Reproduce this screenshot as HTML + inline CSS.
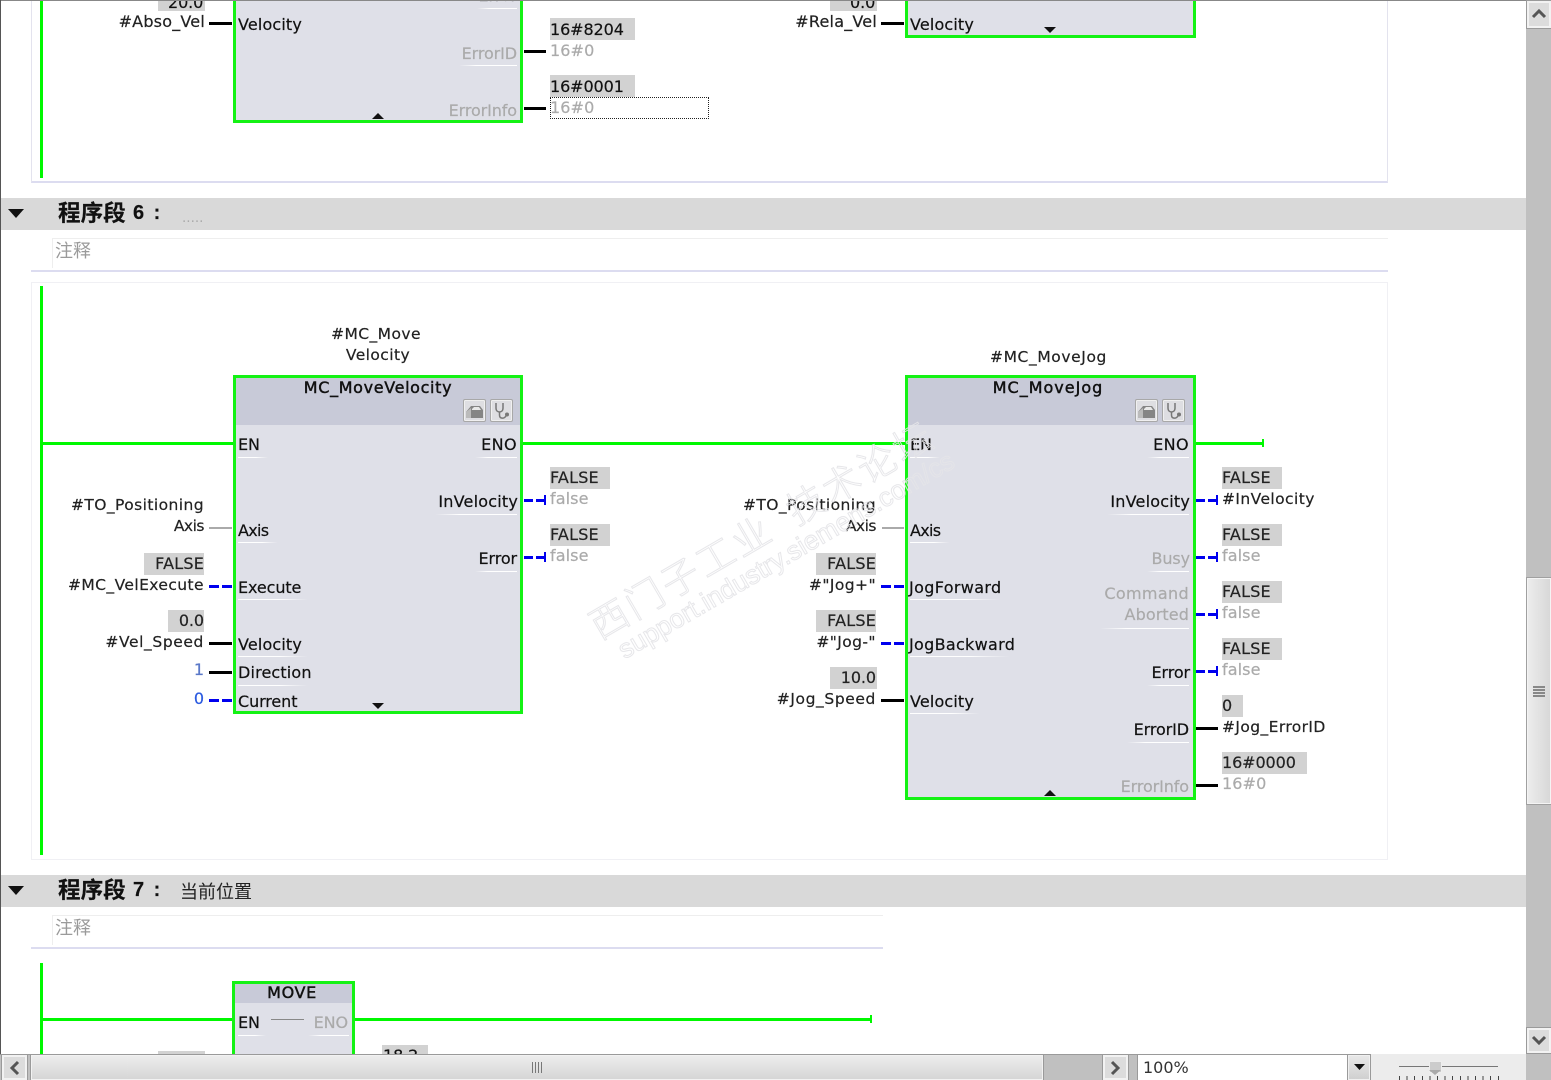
<!DOCTYPE html>
<html><head><meta charset="utf-8"><style>
html,body{margin:0;padding:0;background:#fff}
#p{position:relative;width:1551px;height:1080px;overflow:hidden;background:#fff;font-family:"DejaVu Sans","Liberation Sans",sans-serif;font-size:16px;color:#111}
#c{position:absolute;left:0;top:0;width:1551px;height:1080px;filter:blur(.35px)}
#c div,#p>div{position:absolute}
.t{line-height:20px;white-space:nowrap;letter-spacing:-.1px;-webkit-text-stroke:.2px currentColor}
.r{text-align:right}
.g{color:#aaa}
.n{font-size:15.5px;letter-spacing:.42px;color:#222}
.v{background:#d2d2d2;height:22px}
.k{background:#000;height:3px}
.a{background:#0000ee;height:3px}
.u{height:2px;background:linear-gradient(90deg,rgba(255,255,255,0),#fff 30%,#fff)}
.ul{height:2px;background:linear-gradient(90deg,#fff 60%,rgba(255,255,255,0))}
.b{background:#dfe0e8;border:3px solid #14f214;box-sizing:border-box}
.h{background:#c8cad8}
.gl{background:#00f800}
.s{background:#d9d9d9;left:0;width:1526px;height:32px}
.cjk{font-family:"Noto Sans CJK SC","WenQuanYi Zen Hei",sans-serif}
.b1{width:23px;height:23px;box-sizing:border-box;border:1px solid #a8a8a8;border-radius:2px;background:#dedee2;box-shadow:inset 0 0 0 1px #f0f0f0}
.bh{text-align:center;letter-spacing:.65px;-webkit-text-stroke:.45px #111}
.wm{white-space:nowrap;text-align:center;color:transparent;transform:rotate(-30.2deg)}
</style></head><body><div id="p"><div id="c">

<!-- frames -->
<div style="left:31px;top:-5px;width:1357px;height:188px;box-sizing:border-box;border:1px solid #e3e3ee;border-bottom:2px solid #dcdcf0"></div>
<div style="left:31px;top:282px;width:1357px;height:578px;box-sizing:border-box;border:1px solid #f0f0f4"></div>

<!-- top rung -->
<div class="gl" style="left:40px;top:0;width:3px;height:178px"></div>

<!-- top blocks -->
<div class="b" style="left:233px;top:-20px;width:290px;height:143px"></div>
<div class="b" style="left:905px;top:-20px;width:291px;height:58px"></div>
<div class="t" style="left:238px;top:15px;letter-spacing:.15px">Velocity</div>
<div class="t" style="left:910px;top:15px;letter-spacing:.15px">Velocity</div>
<div class="t r" style="right:1034px;top:-14px">Error</div>
<div class="t r g" style="right:1034px;top:44px;">ErrorID</div>
<div class="t r g" style="right:1034px;top:101px">ErrorInfo</div>
<div class="u" style="left:477px;top:8px;width:40px;height:1px"></div>
<div class="u" style="left:459px;top:65px;width:58px;height:1px"></div>
<svg style="position:absolute;left:372px;top:113px" width="12" height="6"><path d="M0 6L6 0L12 6Z" fill="#111"/></svg>
<svg style="position:absolute;left:1044px;top:27px" width="12" height="6"><path d="M0 0L6 6L12 0Z" fill="#111"/></svg>
<div class="v" style="left:158px;top:-11px;width:47px"></div>
<div class="t" style="left:168px;top:-7px">20.0</div>
<div class="v" style="left:830px;top:-11px;width:47px"></div>
<div class="t" style="left:850px;top:-7px">0.0</div>
<div class="t r" style="right:1346px;top:12px;letter-spacing:.2px;color:#222">#Abso_Vel</div>
<div class="k" style="left:209px;top:22px;width:23px"></div>
<div class="t r" style="right:674px;top:12px;letter-spacing:.2px;color:#222">#Rela_Vel</div>
<div class="k" style="left:881px;top:22px;width:23px"></div>
<div class="v" style="left:550px;top:18px;width:85px"></div>
<div class="t" style="left:550px;top:20px">16#8204</div>
<div class="t g" style="left:550px;top:41px;letter-spacing:.1px">16#0</div>
<div class="k" style="left:524px;top:50px;width:22px"></div>
<div class="v" style="left:550px;top:75px;width:85px"></div>
<div class="t" style="left:550px;top:77px">16#0001</div>
<div style="left:550px;top:97px;width:159px;height:22px;box-sizing:border-box;border:1px dotted #222;background:#fff"></div>
<div class="t g" style="left:550px;top:98px;letter-spacing:.1px">16#0</div>
<div class="k" style="left:524px;top:107px;width:22px"></div>

<!-- network 6 header -->
<div class="s" style="top:198px"></div>
<svg style="position:absolute;left:8px;top:209px" width="16" height="9"><path d="M0 0H16L8 9Z" fill="#111"/></svg>
<div class="t cjk" style="left:58px;top:199px;font-size:22.6px;line-height:26px;font-weight:700;letter-spacing:0">程序段</div>
<div class="t" style="left:133px;top:202px;font-size:20px;line-height:22px;font-weight:700;letter-spacing:2px;font-family:'Liberation Sans',sans-serif">6 :</div>
<div class="t" style="left:182px;top:208px;font-size:13.5px;color:#aaa;letter-spacing:0;-webkit-text-stroke:0">.....</div>
<div style="left:52px;top:238px;width:1px;height:30px;background:#eee"></div>
<div style="left:52px;top:238px;width:1336px;height:1px;background:#eee"></div>
<div class="t cjk" style="left:55px;top:239px;font-size:18px;line-height:22px;color:#9a9a9a;letter-spacing:0;-webkit-text-stroke:0">注释</div>
<div style="left:31px;top:270px;width:1357px;height:2px;background:#dcdcf0"></div>

<!-- network 6 rungs -->
<div class="gl" style="left:40px;top:286px;width:3px;height:569px"></div>
<div class="gl" style="left:42px;top:442px;width:192px;height:3px"></div>
<div class="gl" style="left:522px;top:442px;width:384px;height:3px"></div>
<div class="gl" style="left:1195px;top:442px;width:68px;height:3px"></div>
<div class="gl" style="left:1262px;top:439px;width:2px;height:8px"></div>

<!-- MC_MoveVelocity -->
<div class="t n" style="left:231px;width:290px;text-align:center;top:324px">#MC_Move</div>
<div class="t n" style="left:233px;width:290px;text-align:center;top:345px">Velocity</div>
<div class="b" style="left:233px;top:375px;width:290px;height:339px"></div>
<div class="h" style="left:236px;top:378px;width:284px;height:47px"></div>
<div class="t bh" style="left:233px;width:290px;top:378px">MC_MoveVelocity</div>
<div class="b1" style="left:463px;top:399px"></div>
<div class="b1" style="left:490px;top:399px"></div>
<svg style="position:absolute;left:463px;top:399px" width="23" height="23"><path d="M3 19V13L8 7H17L20 11V19Z" fill="#858585"/><path d="M3 19V13L8 9V19Z" fill="#bbb"/><path d="M9 10L11 8H16L18 11H9Z" fill="#e8e8e8"/></svg>
<svg style="position:absolute;left:490px;top:399px" width="23" height="23"><path d="M6 4V9C6 12 8 13 9.5 13C11 13 13 12 13 9V4M9.5 13V16C9.5 20 14 20 16 17" fill="none" stroke="#777" stroke-width="1.5"/><circle cx="17" cy="15.5" r="2" fill="#777"/></svg>
<div class="t" style="left:238px;top:435px">EN</div>
<div class="ul" style="left:238px;top:457px;width:30px;height:1px"></div>
<div class="t r" style="right:1034px;top:435px;letter-spacing:.4px">ENO</div>
<div class="u" style="left:475px;top:457px;width:42px;height:1px"></div>
<div class="t r" style="right:1033px;top:492px;letter-spacing:.2px">InVelocity</div>
<div class="u" style="left:435px;top:514px;width:82px;height:1px"></div>
<div class="t r" style="right:1034px;top:549px">Error</div>
<div class="u" style="left:475px;top:571px;width:42px;height:1px"></div>
<div class="t" style="left:238px;top:521px;letter-spacing:-.7px">Axis</div>
<div class="ul" style="left:238px;top:542px;width:40px;height:1px"></div>
<div class="t" style="left:238px;top:578px">Execute</div>
<div class="ul" style="left:238px;top:599px;width:70px;height:1px"></div>
<div class="t" style="left:238px;top:635px;letter-spacing:.15px">Velocity</div>
<div class="ul" style="left:238px;top:656px;width:70px;height:1px"></div>
<div class="t" style="left:238px;top:663px;letter-spacing:.15px">Direction</div>
<div class="ul" style="left:238px;top:685px;width:70px;height:1px"></div>
<div class="t" style="left:238px;top:692px">Current</div>
<svg style="position:absolute;left:372px;top:703px" width="12" height="6"><path d="M0 0L6 6L12 0Z" fill="#111"/></svg>

<div class="t r n" style="right:1347px;top:495px">#TO_Positioning</div>
<div class="t r n" style="right:1347px;top:516px;letter-spacing:-.5px">Axis</div>
<div style="left:209px;top:527px;width:23px;height:2px;background:#aaa"></div>
<div class="v" style="left:144px;top:553px;width:60px"></div>
<div class="t r" style="right:1347px;top:554px;letter-spacing:.2px;color:#222">FALSE</div>
<div class="t r n" style="right:1347px;top:575px">#MC_VelExecute</div>
<div class="a" style="left:209px;top:585px;width:10px"></div><div class="a" style="left:222px;top:585px;width:10px"></div>
<div class="v" style="left:168px;top:610px;width:36px"></div>
<div class="t r" style="right:1347px;top:611px;color:#222">0.0</div>
<div class="t r n" style="right:1347px;top:632px;letter-spacing:.6px">#Vel_Speed</div>
<div class="k" style="left:209px;top:642px;width:23px"></div>
<div class="t r" style="right:1347px;top:660px;color:#5a78c8">1</div>
<div class="k" style="left:209px;top:671px;width:23px"></div>
<div class="t r" style="right:1347px;top:689px;color:#2a5ae0">0</div>
<div class="a" style="left:209px;top:699px;width:10px"></div><div class="a" style="left:222px;top:699px;width:10px"></div>

<div class="v" style="left:550px;top:467px;width:60px"></div>
<div class="t" style="left:550px;top:468px;color:#222;letter-spacing:.2px">FALSE</div>
<div class="t g" style="left:550px;top:489px;letter-spacing:.1px">false</div>
<div class="a" style="left:524px;top:499px;width:9px"></div><div class="a" style="left:536px;top:499px;width:10px"></div><div style="left:544px;top:495px;width:2px;height:10px;background:#0000ee"></div>
<div class="v" style="left:550px;top:524px;width:60px"></div>
<div class="t" style="left:550px;top:525px;color:#222;letter-spacing:.2px">FALSE</div>
<div class="t g" style="left:550px;top:546px;letter-spacing:.1px">false</div>
<div class="a" style="left:524px;top:556px;width:9px"></div><div class="a" style="left:536px;top:556px;width:10px"></div><div style="left:544px;top:552px;width:2px;height:10px;background:#0000ee"></div>

<!-- MC_MoveJog -->
<div class="t n" style="left:903.5px;width:290px;text-align:center;top:347px;letter-spacing:.6px">#MC_MoveJog</div>
<div class="b" style="left:905px;top:375px;width:291px;height:425px"></div>
<div class="h" style="left:908px;top:378px;width:285px;height:47px"></div>
<div class="t bh" style="left:903px;width:290px;top:378px;letter-spacing:1px">MC_MoveJog</div>
<div class="b1" style="left:1135px;top:399px"></div>
<div class="b1" style="left:1162px;top:399px"></div>
<svg style="position:absolute;left:1135px;top:399px" width="23" height="23"><path d="M3 19V13L8 7H17L20 11V19Z" fill="#858585"/><path d="M3 19V13L8 9V19Z" fill="#bbb"/><path d="M9 10L11 8H16L18 11H9Z" fill="#e8e8e8"/></svg>
<svg style="position:absolute;left:1162px;top:399px" width="23" height="23"><path d="M6 4V9C6 12 8 13 9.5 13C11 13 13 12 13 9V4M9.5 13V16C9.5 20 14 20 16 17" fill="none" stroke="#777" stroke-width="1.5"/><circle cx="17" cy="15.5" r="2" fill="#777"/></svg>
<div class="t" style="left:910px;top:435px">EN</div>
<div class="ul" style="left:910px;top:457px;width:30px;height:1px"></div>
<div class="t" style="left:910px;top:521px;letter-spacing:-.7px">Axis</div>
<div class="ul" style="left:910px;top:542px;width:40px;height:1px"></div>
<div class="t" style="left:909px;top:578px;letter-spacing:.35px">JogForward</div>
<div class="ul" style="left:910px;top:599px;width:90px;height:1px"></div>
<div class="t" style="left:909px;top:635px;letter-spacing:.3px">JogBackward</div>
<div class="ul" style="left:910px;top:656px;width:100px;height:1px"></div>
<div class="t" style="left:910px;top:692px;letter-spacing:.15px">Velocity</div>
<div class="ul" style="left:910px;top:713px;width:70px;height:1px"></div>
<div class="t r" style="right:362px;top:435px;letter-spacing:.4px">ENO</div>
<div class="u" style="left:1147px;top:457px;width:42px;height:1px"></div>
<div class="t r" style="right:361px;top:492px;letter-spacing:.2px">InVelocity</div>
<div class="u" style="left:1107px;top:514px;width:82px;height:1px"></div>
<div class="t r g" style="right:361px;top:549px">Busy</div>
<div class="u" style="left:1147px;top:571px;width:42px;height:1px"></div>
<div class="t r g" style="right:362px;top:584px;letter-spacing:.35px">Command</div>
<div class="t r g" style="right:362px;top:605px;letter-spacing:.1px">Aborted</div>
<div class="u" style="left:1100px;top:628px;width:89px;height:1px"></div>
<div class="t r" style="right:361px;top:663px">Error</div>
<div class="u" style="left:1147px;top:685px;width:42px;height:1px"></div>
<div class="t r" style="right:362px;top:720px">ErrorID</div>
<div class="u" style="left:1127px;top:742px;width:62px;height:1px"></div>
<div class="t r g" style="right:362px;top:777px">ErrorInfo</div>
<svg style="position:absolute;left:1044px;top:790px" width="12" height="6"><path d="M0 6L6 0L12 6Z" fill="#111"/></svg>

<div class="t r n" style="right:675px;top:495px">#TO_Positioning</div>
<div class="t r n" style="right:675px;top:516px;letter-spacing:-.5px">Axis</div>
<div style="left:882px;top:527px;width:22px;height:2px;background:#aaa"></div>
<div class="v" style="left:816px;top:553px;width:60px"></div>
<div class="t r" style="right:675px;top:554px;letter-spacing:.2px;color:#222">FALSE</div>
<div class="t r n" style="right:675px;top:575px">#"Jog+"</div>
<div class="a" style="left:881px;top:585px;width:10px"></div><div class="a" style="left:894px;top:585px;width:10px"></div>
<div class="v" style="left:816px;top:610px;width:60px"></div>
<div class="t r" style="right:675px;top:611px;letter-spacing:.2px;color:#222">FALSE</div>
<div class="t r n" style="right:675px;top:632px">#"Jog-"</div>
<div class="a" style="left:881px;top:642px;width:10px"></div><div class="a" style="left:894px;top:642px;width:10px"></div>
<div class="v" style="left:830px;top:667px;width:47px"></div>
<div class="t r" style="right:675px;top:668px;color:#222">10.0</div>
<div class="t r n" style="right:675px;top:689px;letter-spacing:.6px">#Jog_Speed</div>
<div class="k" style="left:881px;top:699px;width:23px"></div>

<div class="v" style="left:1222px;top:467px;width:60px"></div>
<div class="t" style="left:1222px;top:468px;color:#222;letter-spacing:.2px">FALSE</div>
<div class="t n" style="left:1222px;top:489px;letter-spacing:.42px">#InVelocity</div>
<div class="a" style="left:1196px;top:499px;width:9px"></div><div class="a" style="left:1208px;top:499px;width:10px"></div><div style="left:1216px;top:495px;width:2px;height:10px;background:#0000ee"></div>
<div class="v" style="left:1222px;top:524px;width:60px"></div>
<div class="t" style="left:1222px;top:525px;color:#222;letter-spacing:.2px">FALSE</div>
<div class="t g" style="left:1222px;top:546px;letter-spacing:.1px">false</div>
<div class="a" style="left:1196px;top:556px;width:9px"></div><div class="a" style="left:1208px;top:556px;width:10px"></div><div style="left:1216px;top:552px;width:2px;height:10px;background:#0000ee"></div>
<div class="v" style="left:1222px;top:581px;width:60px"></div>
<div class="t" style="left:1222px;top:582px;color:#222;letter-spacing:.2px">FALSE</div>
<div class="t g" style="left:1222px;top:603px;letter-spacing:.1px">false</div>
<div class="a" style="left:1196px;top:613px;width:9px"></div><div class="a" style="left:1208px;top:613px;width:10px"></div><div style="left:1216px;top:609px;width:2px;height:10px;background:#0000ee"></div>
<div class="v" style="left:1222px;top:638px;width:60px"></div>
<div class="t" style="left:1222px;top:639px;color:#222;letter-spacing:.2px">FALSE</div>
<div class="t g" style="left:1222px;top:660px;letter-spacing:.1px">false</div>
<div class="a" style="left:1196px;top:670px;width:9px"></div><div class="a" style="left:1208px;top:670px;width:10px"></div><div style="left:1216px;top:666px;width:2px;height:10px;background:#0000ee"></div>
<div class="v" style="left:1222px;top:695px;width:21px"></div>
<div class="t" style="left:1222px;top:696px;color:#222">0</div>
<div class="t n" style="left:1222px;top:717px;letter-spacing:.4px">#Jog_ErrorID</div>
<div class="k" style="left:1196px;top:727px;width:22px"></div>
<div class="v" style="left:1222px;top:752px;width:85px"></div>
<div class="t" style="left:1222px;top:753px;color:#222">16#0000</div>
<div class="t g" style="left:1222px;top:774px;letter-spacing:.1px">16#0</div>
<div class="k" style="left:1196px;top:784px;width:22px"></div>

<!-- network 7 header -->
<div class="s" style="top:875px;height:32px"></div>
<svg style="position:absolute;left:8px;top:886px" width="16" height="9"><path d="M0 0H16L8 9Z" fill="#111"/></svg>
<div class="t cjk" style="left:58px;top:876px;font-size:22.6px;line-height:26px;font-weight:700;letter-spacing:0">程序段</div>
<div class="t" style="left:133px;top:879px;font-size:20px;line-height:22px;font-weight:700;letter-spacing:2px;font-family:'Liberation Sans',sans-serif">7 :</div>
<div class="t cjk" style="left:180px;top:879px;font-size:18px;line-height:24px;color:#222;letter-spacing:0;-webkit-text-stroke:0">当前位置</div>
<div style="left:52px;top:915px;width:1px;height:30px;background:#eee"></div>
<div style="left:52px;top:915px;width:831px;height:1px;background:#eee"></div>
<div class="t cjk" style="left:55px;top:916px;font-size:18px;line-height:22px;color:#9a9a9a;letter-spacing:0;-webkit-text-stroke:0">注释</div>
<div style="left:31px;top:947px;width:852px;height:2px;background:#dcdcf0"></div>

<!-- network 7 -->
<div class="gl" style="left:40px;top:963px;width:3px;height:95px"></div>
<div class="gl" style="left:42px;top:1018px;width:192px;height:3px"></div>
<div class="gl" style="left:353px;top:1018px;width:518px;height:3px"></div>
<div class="gl" style="left:870px;top:1015px;width:2px;height:8px"></div>
<div class="b" style="left:232px;top:981px;width:123px;height:90px"></div>
<div class="h" style="left:235px;top:984px;width:117px;height:19px"></div>
<div class="t bh" style="left:232px;width:120px;top:983px">MOVE</div>
<div class="t" style="left:238px;top:1013px">EN</div>
<div style="left:271px;top:1019px;width:33px;height:1px;background:#888"></div>
<div class="t r g" style="right:1203px;top:1013px">ENO</div>
<div class="ul" style="left:238px;top:1035px;width:28px;height:1px"></div>
<div class="u" style="left:308px;top:1035px;width:41px;height:1px"></div>
<div class="v" style="left:158px;top:1051px;width:47px"></div>
<div class="v" style="left:382px;top:1045px;width:46px"></div>
<div class="t" style="left:383px;top:1046px">18.2</div>

<!-- watermark -->
<div class="cjk wm" style="left:541px;top:501px;width:440px;font-size:38px;line-height:54px;letter-spacing:3px;-webkit-text-stroke:1px rgba(228,228,232,.9);font-weight:300">西门子工业&nbsp;&nbsp;技术论坛</div>
<div class="wm" style="left:566px;top:540px;width:440px;font-family:'Liberation Sans',sans-serif;font-size:26.5px;line-height:30px;-webkit-text-stroke:1px rgba(228,228,232,.9)">support.industry.siemens.com/cs</div>

<!-- outer edge -->
<div style="left:0;top:0;width:1526px;height:1px;background:#888"></div>
<div style="left:0;top:0;width:1px;height:1054px;background:#555"></div>

<!-- horizontal bar -->
<div style="left:0;top:1054px;width:1526px;height:26px;background:#c0c0c0"></div>
<div style="left:0;top:1054px;width:1526px;height:1px;background:#9a9a9a"></div>
<div style="left:2px;top:1055px;width:25px;height:25px;box-sizing:border-box;border:2px solid #f2f2f2;outline:1px solid #9a9a9a;background:#dcdcdc"></div>
<svg style="position:absolute;left:8px;top:1060px" width="14" height="16"><path d="M10 2L4 8L10 14" fill="none" stroke="#555" stroke-width="3"/></svg>
<div style="left:31px;top:1055px;width:1012px;height:25px;box-sizing:border-box;border:1px solid #f2f2f2;outline:1px solid #9a9a9a;background:linear-gradient(#ededed,#d6d6d6)"></div>
<div style="left:532px;top:1062px;width:1px;height:11px;background:#777;box-shadow:3px 0 #777,6px 0 #777,9px 0 #777"></div>
<div style="left:1103px;top:1055px;width:25px;height:25px;box-sizing:border-box;border:2px solid #f2f2f2;outline:1px solid #9a9a9a;background:#dcdcdc"></div>
<svg style="position:absolute;left:1108px;top:1060px" width="14" height="16"><path d="M4 2L10 8L4 14" fill="none" stroke="#555" stroke-width="3"/></svg>
<div style="left:1370px;top:1054px;width:156px;height:26px;background:#ececec"></div>
<div style="left:1138px;top:1055px;width:211px;height:25px;background:#fff;outline:1px solid #9a9a9a"></div>
<div class="t" style="left:1143px;top:1058px;color:#333;letter-spacing:0;-webkit-text-stroke:0">100%</div>
<div style="left:1348px;top:1055px;width:22px;height:25px;box-sizing:border-box;border:1px solid #f0f0f0;outline:1px solid #9a9a9a;background:linear-gradient(#e8e8e8,#d0d0d0)"></div>
<svg style="position:absolute;left:1354px;top:1064px" width="11" height="7"><path d="M0 0H11L5.5 6Z" fill="#111"/></svg>
<div style="left:1399px;top:1066px;width:99px;height:1px;background:#777"></div>
<div style="left:1429px;top:1061px;width:11px;height:10px;background:#ccc;border:1px solid #eee"></div>
<svg style="position:absolute;left:1429px;top:1070px" width="12" height="5"><path d="M0 0H12L6 5Z" fill="#aaa"/></svg>
<div style="left:1399px;top:1076px;width:100px;height:4px;background:repeating-linear-gradient(90deg,#444 0 1px,transparent 1px 7.6px)"></div>

<!-- vertical bar -->
<div style="left:1526px;top:0;width:25px;height:1080px;background:#c0c0c0"></div>
<div style="left:1527px;top:1px;width:24px;height:27px;box-sizing:border-box;border:2px solid #f2f2f2;outline:1px solid #9a9a9a;background:#dcdcdc"></div>
<svg style="position:absolute;left:1531px;top:8px" width="16" height="12"><path d="M2 9L8 3L14 9" fill="none" stroke="#555" stroke-width="3"/></svg>
<div style="left:1527px;top:578px;width:24px;height:226px;box-sizing:border-box;border:1px solid #f4f4f4;outline:1px solid #a0a0a0;background:linear-gradient(90deg,#ececec,#d8d8d8)"></div>
<div style="left:1533px;top:686px;width:12px;height:2px;background:#888;box-shadow:0 3px #888,0 6px #888,0 9px #888"></div>
<div style="left:1527px;top:1028px;width:24px;height:25px;box-sizing:border-box;border:2px solid #f2f2f2;outline:1px solid #9a9a9a;background:#dcdcdc"></div>
<svg style="position:absolute;left:1531px;top:1034px" width="16" height="12"><path d="M2 3L8 9L14 3" fill="none" stroke="#555" stroke-width="3"/></svg>

</div></div></body></html>
